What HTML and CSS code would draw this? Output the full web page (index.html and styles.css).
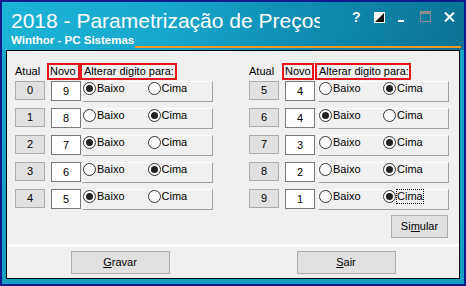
FILE: index.html
```html
<!DOCTYPE html>
<html lang="pt">
<head>
<meta charset="utf-8">
<title>2018 - Parametrização de Preços</title>
<link rel="stylesheet" href="styles.css">
</head>
<body>
<div class="window">
  <div class="titlebar">
    <div class="title-row">
      <div class="title">2018 - Parametrização de Preços</div>
      <div class="caps">
        <span class="cap-help">?</span>
        <svg class="cap-contrast" width="11" height="11" viewBox="0 0 11 11"><rect x="0" y="0" width="11" height="11" fill="#fff"/><polygon points="10,1 10,10 1,10" fill="#111"/></svg>
        <svg class="cap-min" width="6" height="2" viewBox="0 0 6 2"><rect x="0" y="0" width="6" height="2" fill="#fff"/></svg>
        <svg class="cap-max" width="11" height="11" viewBox="0 0 11 11"><rect x="0.5" y="0.5" width="10" height="10" fill="none" stroke="#8e8e8e"/><rect x="0" y="0" width="11" height="3" fill="#8e8e8e"/></svg>
        <svg class="cap-close" width="11" height="10" viewBox="0 0 11 10"><path d="M1 0.5 L10 9.5 M10 0.5 L1 9.5" stroke="#fff" stroke-width="2" fill="none"/></svg>
      </div>
    </div>
    <div class="sub-row">
      <span class="subtitle">Winthor - PC Sistemas</span>
      <span class="orange"></span>
    </div>
  </div>

  <div class="client">
    <div class="main">
      <div class="cols">
        <div class="half">
          <div class="head">
            <span class="lbl-atual">Atual</span>
            <span class="lbl-box lbl-novo">Novo</span>
            <span class="lbl-box lbl-alt">Alterar digito para:</span>
          </div>
          <div class="row"><span class="atual">0</span><span class="novo">9</span><div class="rpanel"><span class="opt on"><i class="rb"></i><span class="txt">Baixo</span></span><span class="opt"><i class="rb"></i><span class="txt">Cima</span></span></div></div>
          <div class="row"><span class="atual">1</span><span class="novo">8</span><div class="rpanel"><span class="opt"><i class="rb"></i><span class="txt">Baixo</span></span><span class="opt on"><i class="rb"></i><span class="txt">Cima</span></span></div></div>
          <div class="row"><span class="atual">2</span><span class="novo">7</span><div class="rpanel"><span class="opt on"><i class="rb"></i><span class="txt">Baixo</span></span><span class="opt"><i class="rb"></i><span class="txt">Cima</span></span></div></div>
          <div class="row"><span class="atual">3</span><span class="novo">6</span><div class="rpanel"><span class="opt"><i class="rb"></i><span class="txt">Baixo</span></span><span class="opt on"><i class="rb"></i><span class="txt">Cima</span></span></div></div>
          <div class="row"><span class="atual">4</span><span class="novo">5</span><div class="rpanel"><span class="opt on"><i class="rb"></i><span class="txt">Baixo</span></span><span class="opt"><i class="rb"></i><span class="txt">Cima</span></span></div></div>
        </div>
        <div class="half right">
          <div class="head">
            <span class="lbl-atual">Atual</span>
            <span class="lbl-box lbl-novo">Novo</span>
            <span class="lbl-box lbl-alt">Alterar digito para:</span>
          </div>
          <div class="row"><span class="atual">5</span><span class="novo">4</span><div class="rpanel"><span class="opt"><i class="rb"></i><span class="txt">Baixo</span></span><span class="opt on"><i class="rb"></i><span class="txt">Cima</span></span></div></div>
          <div class="row"><span class="atual">6</span><span class="novo">4</span><div class="rpanel"><span class="opt on"><i class="rb"></i><span class="txt">Baixo</span></span><span class="opt"><i class="rb"></i><span class="txt">Cima</span></span></div></div>
          <div class="row"><span class="atual">7</span><span class="novo">3</span><div class="rpanel"><span class="opt"><i class="rb"></i><span class="txt">Baixo</span></span><span class="opt on"><i class="rb"></i><span class="txt">Cima</span></span></div></div>
          <div class="row"><span class="atual">8</span><span class="novo">2</span><div class="rpanel"><span class="opt"><i class="rb"></i><span class="txt">Baixo</span></span><span class="opt on"><i class="rb"></i><span class="txt">Cima</span></span></div></div>
          <div class="row"><span class="atual">9</span><span class="novo">1</span><div class="rpanel"><span class="opt"><i class="rb"></i><span class="txt">Baixo</span></span><span class="opt on"><i class="rb"></i><span class="txt focus">Cima</span></span></div></div>
          <button class="btn simular">Si<u>m</u>ular</button>
        </div>
      </div>
    </div>
    <div class="footer">
      <button class="btn big"><u>G</u>ravar</button>
      <button class="btn big"><u>S</u>air</button>
    </div>
  </div>
</div>
</body>
</html>
```
FILE: styles.css
```css
* { box-sizing: border-box; }
html, body { margin: 0; padding: 0; }
body {
  width: 466px;
  height: 286px;
  overflow: hidden;
  font-family: "Liberation Sans", Arial, sans-serif;
  font-size: 11px;
  color: #000;
  background: #0c1b8c;
}
.window {
  width: 466px;
  height: 286px;
  border: 2px solid #0c1b8c;
  background: linear-gradient(#1aa9cb, #139fc1);
  padding: 0 4px 5px;
  display: flex;
  flex-direction: column;
}
.titlebar {
  flex: none;
  height: 48px;
  margin: 0 -4px;
  padding: 7px 0 0 9px;
  color: #fff;
  background: linear-gradient(100deg, #1bb3d7 0%, #17a8cd 35%, #0f8fb4 62%, #0a7395 100%);
  display: flex;
  flex-direction: column;
}
.title-row { display: flex; align-items: flex-start; height: 24px; }
.title {
  width: 309px;
  overflow: hidden;
  white-space: nowrap;
  font-size: 21px;
  line-height: 24px;
}
.caps { display: flex; align-items: flex-start; }
.cap-help {
  display: inline-block;
  width: 9px;
  margin-left: 32px;
  margin-top: 1px;
  font-weight: bold;
  font-size: 14px;
  line-height: 14px;
}
.caps svg { display: block; flex: none; }
.cap-contrast { margin-left: 13px; margin-top: 3px; }
.cap-min { margin-left: 13px; margin-top: 11px; }
.cap-max { margin-left: 16px; margin-top: 2px; }
.cap-close { margin-left: 13px; margin-top: 3px; }
.sub-row { display: flex; align-items: flex-end; height: 15px; }
.subtitle {
  font-weight: bold;
  font-size: 11.5px;
  line-height: 14px;
  white-space: nowrap;
  align-self: flex-start;
}
.orange { flex: 1; height: 2px; background: #f39a1c; margin: 0 3px 0 1px; }

.client {
  flex: 1;
  border: 1px solid #000;
  background: #f0f0f0;
  display: flex;
  flex-direction: column;
}
.main { flex: 1; padding: 12px 0 0 8px; }
.cols { display: flex; gap: 36px; align-items: flex-start; }
.half { display: flex; flex-direction: column; width: 198px; }
.half.right { width: 200px; }

.head { display: flex; height: 17px; margin-bottom: 1px; }
.lbl-atual { width: 32px; line-height: 17px; }
.right .lbl-atual { width: 33px; }
.lbl-box {
  border: 2px solid #e8141c;
  height: 17px;
  line-height: 13px;
  white-space: nowrap;
}
.lbl-novo { width: 33px; padding-left: 1px; }
.lbl-alt { width: 97px; padding-left: 2px; margin-left: 0; }
.right .lbl-novo { width: 32px; }
.right .lbl-alt { width: 96px; margin-left: 1px; }

.row { display: flex; height: 21px; margin-bottom: 6px; }
.atual {
  width: 30px;
  height: 19px;
  border: 1px solid #adadad;
  background: #e1e1e1;
  text-align: center;
  line-height: 17px;
}
.novo {
  width: 30px;
  height: 20px;
  margin-left: 6px;
  border: 1px solid #7a7a7a;
  background: #fff;
  text-align: center;
  line-height: 18px;
}
.rpanel {
  width: 131px;
  height: 21px;
  margin-left: 1px;
  border-top: 1px solid #fff;
  border-left: 1px solid #fff;
  border-right: 1px solid #a0a0a0;
  border-bottom: 1px solid #a0a0a0;
  display: flex;
  align-items: flex-start;
}
.right .rpanel { margin-left: 3px; }
.opt { display: flex; align-items: flex-start; width: 66px; }
.right .opt:first-child { width: 65px; }
.rb {
  position: relative;
  flex: none;
  width: 13px;
  height: 13px;
  border: 1px solid #333;
  border-radius: 50%;
  background: #fff;
  margin-right: 1px;
}
.opt.on .rb::after {
  content: "";
  position: absolute;
  left: 2px;
  top: 2px;
  width: 7px;
  height: 7px;
  border-radius: 50%;
  background: #222;
}
.txt { line-height: 13px; white-space: nowrap; }
.txt.focus { outline: 1px dotted #000; outline-offset: 0; }

.btn {
  font-family: "Liberation Sans", Arial, sans-serif;
  font-size: 11px;
  color: #000;
  background: #e1e1e1;
  border: 1px solid #adadad;
  padding: 0;
  line-height: 21px;
  text-align: center;
}
.btn u { text-decoration: underline; text-underline-offset: 1px; }
.simular {
  align-self: flex-end;
  width: 57px;
  height: 23px;
  margin-top: -1px;
  margin-right: 1px;
}
.footer {
  flex: none;
  height: 34px;
  border-top: 3px solid #fff;
  padding-top: 4px;
  display: grid;
  grid-template-columns: 1fr 1fr;
  justify-items: center;
  align-items: start;
}
.big { width: 99px; height: 23px; }
```
